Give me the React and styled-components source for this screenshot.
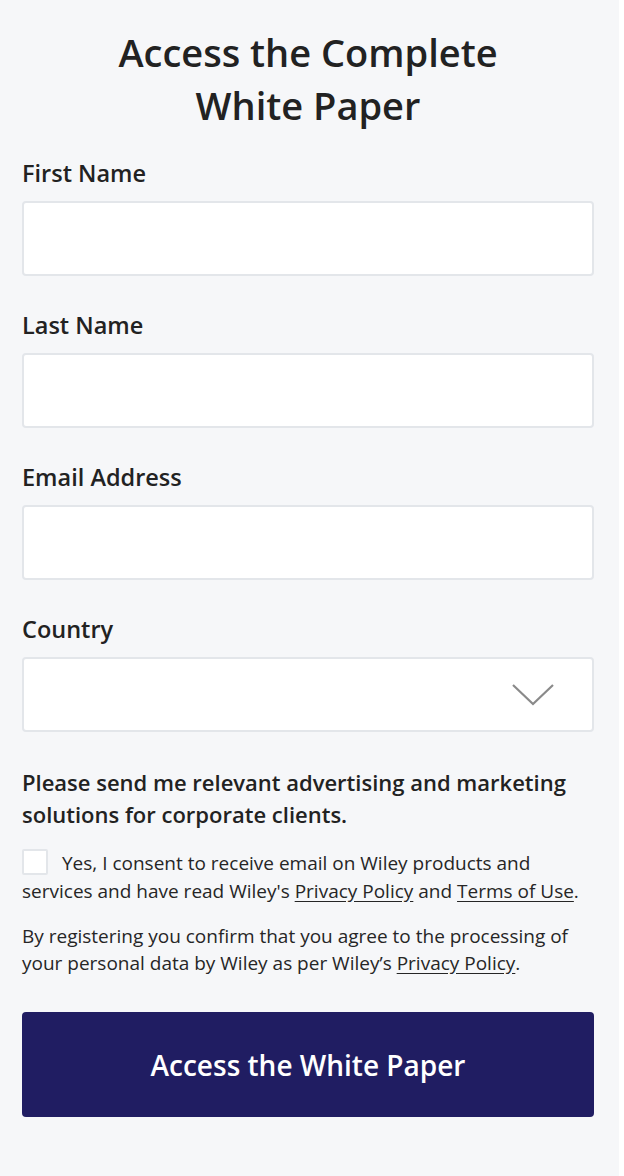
import React from "react";
import styled, { createGlobalStyle } from "styled-components";

const GlobalStyle = createGlobalStyle`
  html, body {
    margin: 0;
    padding: 0;
    background: #ffffff;
  }
  body {
    font-family: "Open Sans", "Lato", sans-serif;
    color: #222222;
  }
`;

const fields = ["First Name", "Last Name", "Email Address"];

function App() {
  return (
    <>
      <GlobalStyle />
      <Page>
        <Title>
          Access the Complete
          <br />
          White Paper
        </Title>
        <Form onSubmit={(e) => e.preventDefault()}>
          {fields.map((label) => (
            <Field key={label}>
              <Label>{label}</Label>
              <Input type="text" />
            </Field>
          ))}
          <Field>
            <Label>Country</Label>
            <SelectBox>
              <Chevron width="44" height="24" viewBox="0 0 44 24">
                <path d="M2 2 L22 21 L42 2" fill="none" stroke="#8a8a8a" strokeWidth="2.2" />
              </Chevron>
            </SelectBox>
          </Field>
          <Marketing>
            Please send me relevant advertising and marketing solutions for
            corporate clients.
          </Marketing>
          <Consent>
            <Checkbox />
            Yes, I consent to receive email on Wiley products and services and
            have read Wiley's <Link>Privacy Policy</Link> and{" "}
            <Link>Terms of Use</Link>.
          </Consent>
          <Note>
            By registering you confirm that you agree to the processing of your
            personal data by Wiley as per Wiley’s <Link>Privacy Policy</Link>.
          </Note>
          <Submit type="submit">Access the White Paper</Submit>
        </Form>
      </Page>
    </>
  );
}

export default App;

const Page = styled.div`
  width: 619px;
  min-height: 1176px;
  box-sizing: border-box;
  background: #f6f7f9;
  padding: 26px 25px 40px 22px;
`;

const Title = styled.h1`
  margin: 0;
  text-align: center;
  font-size: 38px;
  line-height: 53px;
  font-weight: 600;
  color: #222222;
`;

const Form = styled.form`
  display: flex;
  flex-direction: column;
  margin-top: 26px;
`;

const Field = styled.div`
  display: flex;
  flex-direction: column;
  margin-bottom: 34px;
`;

const Label = styled.label`
  font-size: 23.5px;
  line-height: 30px;
  font-weight: 600;
  margin-bottom: 13px;
`;

const Input = styled.input`
  box-sizing: border-box;
  height: 75px;
  border: 2px solid #e3e6ea;
  border-radius: 4px;
  background: #ffffff;
  outline: 0;
  padding: 0 16px;
  font-size: 20px;
`;

const SelectBox = styled.div`
  box-sizing: border-box;
  height: 75px;
  border: 2px solid #e3e6ea;
  border-radius: 4px;
  background: #ffffff;
  display: flex;
  align-items: center;
  justify-content: flex-end;
  padding-right: 37px;
`;

const Chevron = styled.svg`
  display: block;
`;

const Marketing = styled.p`
  margin: 0 0 19px;
  font-size: 22px;
  line-height: 32px;
  font-weight: 600;
`;

const Consent = styled.p`
  margin: 0;
  font-size: 19px;
  line-height: 28px;
  color: #262626;
`;

const Checkbox = styled.span`
  display: inline-block;
  box-sizing: border-box;
  width: 26px;
  height: 26px;
  border: 2px solid #e3e6ea;
  border-radius: 2px;
  background: #ffffff;
  vertical-align: -5px;
  margin-right: 14px;
`;

const Link = styled.a`
  color: inherit;
  text-decoration: underline;
  text-underline-offset: 3px;
  cursor: pointer;
`;

const Note = styled.p`
  margin: 18px 0 0;
  font-size: 19px;
  line-height: 27px;
  color: #262626;
`;

const Submit = styled.button`
  margin-top: 35px;
  height: 105px;
  border: none;
  border-radius: 4px;
  background: #201d62;
  color: #ffffff;
  font-family: inherit;
  font-size: 28px;
  font-weight: 600;
  cursor: pointer;
`;
